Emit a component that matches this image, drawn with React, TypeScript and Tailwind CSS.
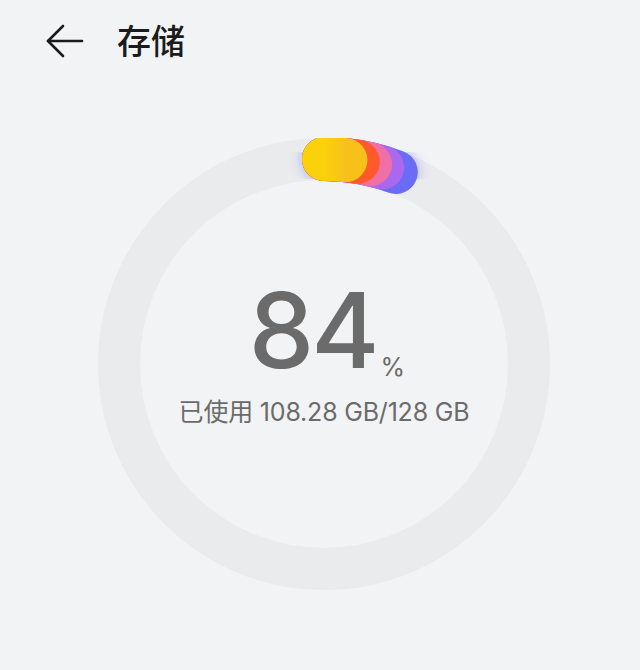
const segments = [
  { color: "#6a6cf6", x: 297.8, y: 34.0 },
  { color: "#a968ee", x: 284.2, y: 29.4 },
  { color: "#f06fa6", x: 272.1, y: 26.2 },
  { color: "#ff5a2c", x: 259.8, y: 23.8 },
  { color: "url(#yellow)", x: 247.4, y: 22.1 },
];

function UsageArc() {
  return (
    <svg className="absolute -inset-[42px]" width="452" height="452" viewBox="0 0 452 452">
      <defs>
        <linearGradient id="yellow" x1="0" y1="0" x2="1" y2="0">
          <stop offset="0" stopColor="#fad10a" />
          <stop offset="1" stopColor="#f6c21a" />
        </linearGradient>
        <filter id="glow" x="-50%" y="-50%" width="200%" height="200%">
          <feGaussianBlur stdDeviation="6" />
        </filter>
      </defs>
      <path
        d="M 226 21 A 205 205 0 0 1 297.8 34"
        stroke="#7b7cf8"
        strokeOpacity="0.5"
        strokeWidth="46"
        strokeLinecap="round"
        fill="none"
        filter="url(#glow)"
      />
      {segments.map((s, i) => (
        <path
          key={i}
          d={`M 226 21 A 205 205 0 0 1 ${s.x} ${s.y}`}
          stroke={s.color}
          strokeWidth="44"
          strokeLinecap="round"
          fill="none"
        />
      ))}
    </svg>
  );
}

function BackArrow() {
  return (
    <svg width="38" height="34" viewBox="0 0 38 34" fill="none" stroke="#1b1b1b" strokeWidth="2.6" strokeLinecap="round" strokeLinejoin="round">
      <path d="M2 17 H36" />
      <path d="M17 2 L2 17 L17 32" />
    </svg>
  );
}

export default function App() {
  return (
    <div className="w-[640px] h-[670px] bg-[#f2f3f5] font-['Inter','Noto_Sans_CJK_SC',sans-serif] overflow-hidden">
      <header className="flex items-center h-[82px] pl-[46px] gap-[33px]">
        <BackArrow />
        <h1 className="text-[34px] font-medium text-[#1b1b1b] font-['Noto_Sans_CJK_SC',sans-serif] leading-none pb-[2px]">存储</h1>
      </header>

      <div className="mt-[56px] ml-[98px] relative w-[452px] h-[452px] rounded-full border-[42px] border-[#eaebed]">
        <UsageArc />
        <div className="flex flex-col items-center justify-center h-full pb-[26px]">
          <div className="flex items-end text-[#6b6b6b] pl-[6px]">
            <span className="text-[104px] font-medium leading-none tracking-[-3px]">84</span>
            <span className="text-[25px] ml-[4px] mb-[2px] leading-none">%</span>
          </div>
          <p className="mt-[18px] text-[25px] text-[#6b6b6b] leading-none tracking-[-0.2px]">
            已使用 108.28 GB/128 GB
          </p>
        </div>
      </div>
    </div>
  );
}
